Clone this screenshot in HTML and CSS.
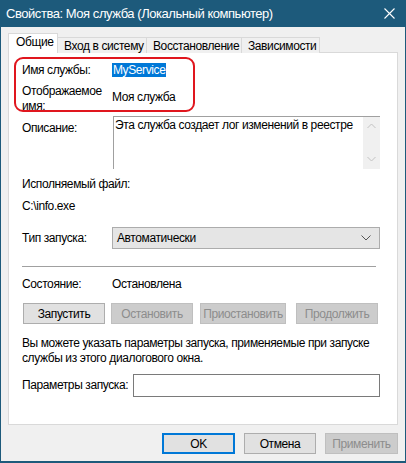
FILE: index.html
```html
<!DOCTYPE html>
<html lang="ru">
<head>
    <meta charset="UTF-8">
    <title>Свойства: Моя служба</title>
    <link rel="stylesheet" href="styles.css">
</head>
<body>
    <div class="dialog">
        <div class="titlebar">
            <span class="caption">Свойства: Моя служба (Локальный компьютер)</span>
            <svg class="close" width="11" height="11" viewBox="0 0 11 11">
                <path d="M0.5 0.5 L10.5 10.5 M10.5 0.5 L0.5 10.5" stroke="#ffffff" stroke-width="1.1" fill="none"/>
            </svg>
        </div>

        <div class="tabs">
            <div class="tab tab-active">Общие</div>
            <div class="tab tab-login">Вход в систему</div>
            <div class="tab tab-recovery">Восстановление</div>
            <div class="tab tab-deps">Зависимости</div>
        </div>

        <div class="panel">
            <div class="highlight"></div>

            <div class="row row-name">
                <span class="label">Имя службы:</span>
                <span class="value"><span class="selected">MyService</span></span>
            </div>

            <div class="row row-display">
                <span class="label">Отображаемое<br>имя:</span>
                <span class="value value-display">Моя служба</span>
            </div>

            <div class="row row-desc">
                <span class="label label-desc">Описание:</span>
                <div class="desc-box">
                    <div class="desc-text">Эта служба создает лог изменений в реестре</div>
                    <div class="scrollbar">
                        <svg width="9" height="6" viewBox="0 0 9 6"><path d="M0.5 5 L4.5 1 L8.5 5" stroke="#c2c2c2" fill="none"/></svg>
                        <svg width="9" height="6" viewBox="0 0 9 6"><path d="M0.5 1 L4.5 5 L8.5 1" stroke="#c2c2c2" fill="none"/></svg>
                    </div>
                </div>
            </div>

            <div class="line line-exe">Исполняемый файл:</div>
            <div class="line line-path">C:\info.exe</div>

            <div class="row row-startup">
                <span class="label">Тип запуска:</span>
                <div class="combo">
                    <span>Автоматически</span>
                    <svg width="10" height="6" viewBox="0 0 10 6"><path d="M0.5 0.5 L5 5 L9.5 0.5" stroke="#555555" fill="none"/></svg>
                </div>
            </div>

            <div class="separator"></div>

            <div class="row row-state">
                <span class="label">Состояние:</span>
                <span class="value">Остановлена</span>
            </div>

            <div class="actions">
                <button class="btn btn-start">Запустить</button>
                <button class="btn btn-stop" disabled>Остановить</button>
                <button class="btn btn-pause" disabled>Приостановить</button>
                <button class="btn btn-resume" disabled>Продолжить</button>
            </div>

            <p class="hint">Вы можете указать параметры запуска, применяемые при запуске службы из этого диалогового окна.</p>

            <div class="row row-params">
                <span class="label-params">Параметры запуска:</span>
                <div class="params-input"></div>
            </div>
        </div>

        <div class="footer">
            <button class="btn btn-ok">OK</button>
            <button class="btn btn-cancel">Отмена</button>
            <button class="btn btn-apply" disabled>Применить</button>
        </div>
    </div>
</body>
</html>
```

FILE: styles.css
```css
:root {
  --frame: #1d5a7b;
  --face: #f0f0f0;
  --tab-border: #d9d9d9;
  --btn: #e1e1e1;
  --btn-border: #adadad;
  --accent: #0078d7;
  --disabled: #cccccc;
  --disabled-text: #8d8d8d;
}
body {
  margin: 0;
  font-family: "Liberation Sans", Arial, sans-serif;
  font-size: 12px;
  line-height: 15px;
  letter-spacing: -0.4px;
  color: #000000;
}
.dialog {
  width: 406px;
  height: 463px;
  box-sizing: border-box;
  border: 1px solid var(--frame);
  border-top: none;
  border-bottom-width: 2px;
  background-color: var(--face);
  display: flex;
  flex-direction: column;
}
.titlebar {
  height: 27px;
  flex-shrink: 0;
  background-color: var(--frame);
  color: #ffffff;
  display: flex;
  align-items: center;
  justify-content: space-between;
  padding: 0 10px 0 5px;
  font-size: 13px;
  letter-spacing: -0.45px;
}
.caption {
  margin-top: -1px;
}
.close {
  margin-top: -1px;
}

/* вкладки */
.tabs {
  display: flex;
  align-items: flex-end;
  margin: 6px 0 -1px 7px;
  height: 20px;
  position: relative;
  z-index: 1;
}
.tab {
  box-sizing: border-box;
  height: 16px;
  border: 1px solid var(--tab-border);
  border-left: none;
  border-bottom: none;
  background-color: var(--face);
  padding-left: 6px;
  line-height: 16px;
  white-space: nowrap;
  overflow: hidden;
}
.tab-active {
  height: 20px;
  width: 50px;
  background-color: #ffffff;
  border-left: 1px solid var(--tab-border);
  padding-left: 7px;
  line-height: 17px;
}
.tab-login { width: 89px; }
.tab-recovery { width: 95px; }
.tab-deps { width: 78px; }

/* страница */
.panel {
  position: relative;
  box-sizing: border-box;
  margin: 0 7px 0 7px;
  height: 373px;
  background-color: #ffffff;
  border: 1px solid var(--tab-border);
  padding: 10px 17px 0 13px;
}
.highlight {
  position: absolute;
  left: 5px;
  top: 4px;
  width: 181px;
  height: 55px;
  box-sizing: border-box;
  border: 2px solid #e0161e;
  border-radius: 9px;
}
.row {
  display: flex;
  align-items: flex-start;
}
.label {
  width: 90px;
  flex-shrink: 0;
}
.selected {
  background-color: var(--accent);
  color: #ffffff;
  padding: 0 1px;
  display: inline-block;
  line-height: 14px;
}
.row-display {
  margin-top: 6px;
}
.value-display {
  padding-top: 6px;
}
.row-desc {
  margin-top: 2px;
}
.label-desc {
  width: 91px;
  padding-top: 5px;
}
.desc-box {
  flex: 1;
  height: 52px;
  display: flex;
  border-top: 1px solid #a0a0a0;
  border-left: 1px solid #a0a0a0;
}
.desc-text {
  flex: 1;
  padding: 1px 0 0 1px;
  white-space: nowrap;
}
.scrollbar {
  width: 17px;
  background-color: var(--face);
  display: flex;
  flex-direction: column;
  justify-content: space-between;
  align-items: center;
  padding: 6px 0 7px;
}
.line-exe {
  margin-top: 8px;
}
.line-path {
  margin-top: 7px;
}
.row-startup {
  margin-top: 13px;
  align-items: center;
}
.combo {
  flex: 1;
  box-sizing: border-box;
  height: 22px;
  background-color: #e5e5e5;
  border: 1px solid #acacac;
  display: flex;
  align-items: center;
  justify-content: space-between;
  padding: 0 8px 0 4px;
}
.separator {
  height: 1px;
  background-color: #a0a0a0;
  margin: 17px 4px 0 0;
}
.row-state {
  margin-top: 10px;
}

/* кнопки */
.btn {
  box-sizing: border-box;
  height: 21px;
  font-family: inherit;
  font-size: 12px;
  letter-spacing: -0.4px;
  color: #000000;
  background-color: var(--btn);
  border: 1px solid var(--btn-border);
  padding: 0;
}
.btn:disabled {
  background-color: var(--disabled);
  border-color: #bfbfbf;
  color: var(--disabled-text);
}
.actions {
  display: flex;
  margin-top: 11px;
}
.btn-start { width: 82px; margin-left: 1px; }
.btn-stop { width: 82px; margin-left: 6px; }
.btn-pause { width: 86px; margin-left: 7px; }
.btn-resume { width: 82px; margin-left: 10px; }

.hint {
  margin: 12px 0 0;
  width: 352px;
}
.row-params {
  margin-top: 8px;
  align-items: center;
}
.label-params {
  width: 111px;
  flex-shrink: 0;
  white-space: nowrap;
}
.params-input {
  flex: 1;
  box-sizing: border-box;
  height: 23px;
  border: 1px solid #7a7a7a;
  background-color: #ffffff;
}

.footer {
  display: flex;
  justify-content: flex-end;
  gap: 9px;
  margin: 8px 7px 0 0;
}
.btn-ok {
  width: 73px;
  border: 2px solid var(--accent);
}
.btn-cancel { width: 72px; }
.btn-apply { width: 73px; }
```
